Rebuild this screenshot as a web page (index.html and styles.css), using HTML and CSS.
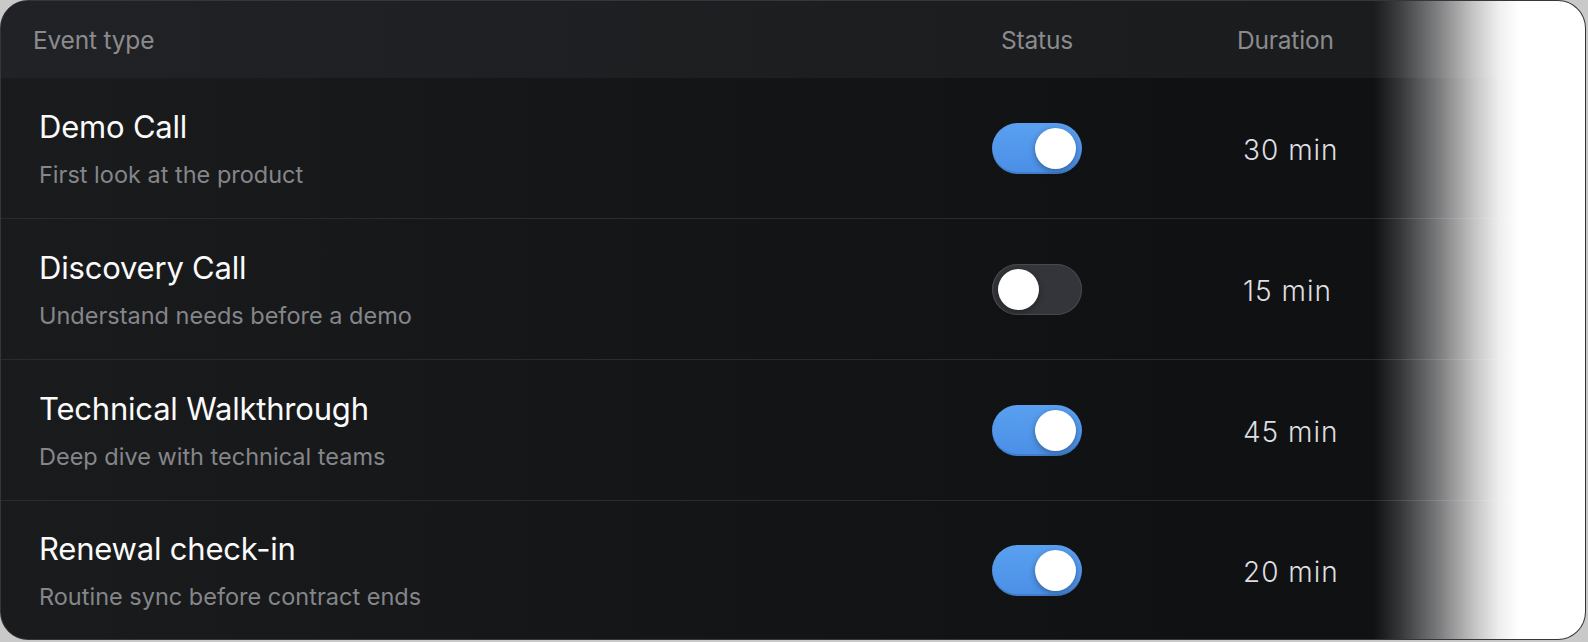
FILE: index.html
```html
<!DOCTYPE html>
<html lang="en">
<head>
  <meta charset="UTF-8">
  <meta name="viewport" content="width=device-width, initial-scale=1.0">
  <title>Event types</title>
  <link rel="stylesheet" href="styles.css">
</head>
<body>

  <div class="card">
    <div class="head">
      <div class="col-name">Event type</div>
      <div class="col-status">Status</div>
      <div class="col-dur">Duration</div>
    </div>

    <div class="row">
      <div class="col-name">
        <div class="title">Demo Call</div>
        <div class="sub">First look at the product</div>
      </div>
      <div class="col-status"><span class="toggle on"><span class="knob"></span></span></div>
      <div class="col-dur dur">30 min</div>
    </div>

    <div class="row">
      <div class="col-name">
        <div class="title">Discovery Call</div>
        <div class="sub">Understand needs before a demo</div>
      </div>
      <div class="col-status"><span class="toggle"><span class="knob"></span></span></div>
      <div class="col-dur dur">15 min</div>
    </div>

    <div class="row">
      <div class="col-name">
        <div class="title">Technical Walkthrough</div>
        <div class="sub">Deep dive with technical teams</div>
      </div>
      <div class="col-status"><span class="toggle on"><span class="knob"></span></span></div>
      <div class="col-dur dur">45 min</div>
    </div>

    <div class="row last">
      <div class="col-name">
        <div class="title">Renewal check-in</div>
        <div class="sub">Routine sync before contract ends</div>
      </div>
      <div class="col-status"><span class="toggle on"><span class="knob"></span></span></div>
      <div class="col-dur dur">20 min</div>
    </div>

    <div class="fade"></div>
  </div>

</body>
</html>
```

FILE: styles.css
```css
body, div {
  margin: 0;
  padding: 0;
}

body {
  background: #c9c9c9;
  font-family: Inter, "Noto Sans", sans-serif;
  width: 1588px;
  height: 642px;
  overflow: hidden;
}

.card {
  position: relative;
  display: flex;
  flex-direction: column;
  width: 1584px;
  height: 638px;
  border: 1px solid #35363a;
  border-radius: 28px;
  overflow: hidden;
  background: linear-gradient(to right, #1a1b1d, #101113 75%);
}

.head,
.row {
  display: grid;
  grid-template-columns: 1fr 200px 448px;
  align-items: center;
}

.head {
  height: 77px;
  flex: none;
  background: linear-gradient(to right, #212225, #1b1c1e 80%);
  color: #8b8b8e;
  font-size: 24.5px;
  letter-spacing: -0.2px;
}

.head .col-name {
  padding-left: 32px;
}

.head .col-dur {
  padding-left: 100px;
}

.col-status {
  display: flex;
  justify-content: center;
}

.row {
  height: 140px;
  flex: none;
  border-bottom: 1px solid #2a2b2e;
}

.row.last {
  flex: 1;
  height: auto;
  border-bottom: none;
}

.row .col-name {
  padding-left: 38px;
  padding-top: 2px;
}

.title {
  color: #fafafa;
  font-size: 31px;
  line-height: 36px;
  letter-spacing: -0.2px;
}

.sub {
  color: #85868a;
  font-size: 23.5px;
  line-height: 28px;
  margin-top: 16px;
}

.dur {
  color: #dedee0;
  font-size: 28px;
  font-weight: 300;
  letter-spacing: 1px;
  padding-left: 106px;
  padding-top: 4px;
}

.toggle {
  position: relative;
  width: 90px;
  height: 51px;
  border-radius: 26px;
  background: #34353a;
  box-shadow: inset 0 0 0 1px #48494d;
}

.toggle.on {
  background: linear-gradient(#5aa0f0, #4a8fe6);
  box-shadow: inset 0 -2px 0 rgba(0, 0, 0, 0.12);
}

.knob {
  position: absolute;
  top: 5px;
  left: 6px;
  width: 41px;
  height: 41px;
  border-radius: 50%;
  background: #fff;
  box-shadow: 0 2px 6px rgba(0, 0, 0, 0.35);
}

.toggle.on .knob {
  left: 43px;
}

.fade {
  position: absolute;
  top: 0;
  right: 0;
  bottom: 0;
  width: 211px;
  background: linear-gradient(to right,
    rgba(255, 255, 255, 0) 0,
    rgba(255, 255, 255, 0.15) 25px,
    rgba(255, 255, 255, 0.45) 65px,
    rgba(255, 255, 255, 0.75) 100px,
    rgba(255, 255, 255, 0.93) 125px,
    #fff 145px);
}
```
